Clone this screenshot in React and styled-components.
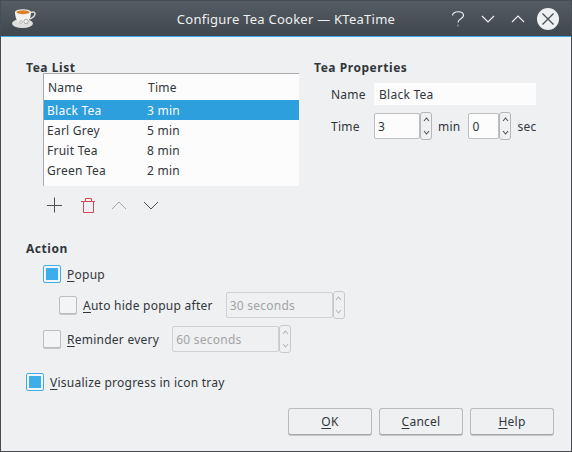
import React from 'react'
import styled, { createGlobalStyle } from 'styled-components'

const Global = createGlobalStyle`
  html, body { margin: 0; padding: 0; background: #eff0f1; }
  * { box-sizing: border-box; }
`

const Window = styled.div`
  width: 572px;
  height: 452px;
  display: flex;
  flex-direction: column;
  overflow: hidden;
  background: #eff0f1;
  color: #31363b;
  font-family: "Noto Sans", sans-serif;
  font-size: 12px;
  letter-spacing: 0.25px;
  border: 1px solid #474d53;
  border-top: 0;
`

const TitleBar = styled.div`
  height: 37px;
  flex: none;
  margin: 0 -1px;
  display: flex;
  align-items: center;
  background: linear-gradient(#555c64, #3f464c);
  border-bottom: 1px solid #3daee9;
  border-top: 1px solid #474d53;
  color: #eff0f1;
  padding: 0 13px 0 12px;
`

const Title = styled.div`
  flex: 1;
  text-align: center;
  font-size: 13px;
  padding-left: 85px;
`

const WinButtons = styled.div`
  display: flex;
  align-items: center;
  gap: 16px;
`

const CloseIcon = styled.svg`
  margin-left: -4px;
`

const Body = styled.div`
  flex: 1;
  display: flex;
  flex-direction: column;
  padding: 23px 17px 16px 25px;
`

const TopRow = styled.div`
  display: flex;
  height: 181px;
`

const LeftCol = styled.div`
  width: 288px;
  flex: none;
`

const Heading = styled.div`
  font-weight: 700;
  letter-spacing: 0.55px;
  line-height: 14px;
  height: 14px;
  margin-top: 1px;
`

const Table = styled.div`
  width: 256px;
  height: 113px;
  margin-left: 17px;
  margin-top: -2px;
  background: #fcfcfc;
  border-top: 1px solid #a9abad;
  border-left: 1px solid #a9abad;
`

const TableRow = styled.div`
  display: flex;
  height: 20px;
  line-height: 21px;
  padding-left: 3px;
  background: ${p => (p.$selected ? '#2d9fdd' : 'transparent')};
  color: ${p => (p.$selected ? '#fcfcfc' : '#31363b')};
`

const HeaderRow = styled(TableRow)`
  height: 26px;
  line-height: 27px;
  padding-left: 4px;
`

const NameCell = styled.div`
  width: 100px;
`

const IconBar = styled.div`
  display: flex;
  margin-left: 13px;
  margin-top: 8px;
`

const IconButton = styled.div`
  width: 32px;
  height: 22px;
  display: flex;
  align-items: center;
  justify-content: center;
`

const RightCol = styled.div`
  flex: 1;
`

const FormRow = styled.div`
  display: flex;
  align-items: center;
  margin-left: 17px;
`

const FormLabel = styled.div`
  width: 43px;
`

const NameField = styled.div`
  width: 162px;
  height: 22px;
  line-height: 23px;
  padding-left: 5px;
  background: #fcfcfc;
`

const TimeRow = styled(FormRow)`
  margin-top: 7px;
`

const SpinGroup = styled.div`
  display: flex;
  align-items: center;
  flex: none;
`

const SpinInput = styled.div`
  width: ${p => p.$w}px;
  height: 26px;
  line-height: 25px;
  margin-left: ${p => (p.$disabled ? '1px' : '0')};
  padding-left: 3px;
  background: ${p => (p.$disabled ? '#eff0f1' : '#fcfcfc')};
  color: ${p => (p.$disabled ? '#a2a4a6' : '#31363b')};
  border: 1px solid ${p => (p.$disabled ? '#d0d1d3' : '#bcbebf')};
  border-radius: 2px;
`

const SpinButtons = styled.div`
  width: 12px;
  height: 28px;
  border: 1px solid ${p => (p.$disabled ? '#c8c9cb' : '#b4b6b8')};
  border-radius: 3px;
  display: flex;
  flex-direction: column;
  align-items: center;
  justify-content: space-between;
  padding: 4px 0 4px;
  background: #eff0f1;
`

const Unit = styled.div`
  margin: 0 8px 0 6px;
`

const CheckRow = styled.div`
  display: flex;
  align-items: center;
  gap: 6px;
  height: ${p => p.$h}px;
  margin-top: ${p => p.$top || 0}px;
  margin-left: ${p => p.$indent || 0}px;
`

const Box = styled.div`
  width: 18px;
  height: 18px;
  flex: none;
  border-radius: 2px;
  border: 1px solid ${p => (p.$checked ? '#3daee9' : '#bcbebf')};
  background: #f3f4f5;
  box-shadow: ${p => (p.$checked ? 'none' : '0 1px 0 #c4c5c7')};
  padding: 2px;
`

const BoxFill = styled.div`
  width: 100%;
  height: 100%;
  background: #3daee9;
`

const Key = styled.span`
  text-decoration: underline;
  text-underline-offset: 2px;
`

const Footer = styled.div`
  display: flex;
  justify-content: flex-end;
  gap: 7px;
  margin-top: auto;
`

const PushButton = styled.div`
  width: 84px;
  height: 27px;
  line-height: 26px;
  text-align: center;
  border: 1px solid #b9bbbd;
  border-bottom-color: #a6a8aa;
  border-radius: 3px;
  background: #eff0f1;
  box-shadow: 0 1px 0 #c4c5c7;
`

const Spacer = styled.div`
  height: ${p => p.$h}px;
`

function Chevron ({ up, color = '#eff0f1', w = 14, h = 8, stroke = 1.2 }) {
  const points = up ? `1,${h - 1} ${w / 2},1 ${w - 1},${h - 1}` : `1,1 ${w / 2},${h - 1} ${w - 1},1`
  return (
    <svg width={w} height={h} viewBox={`0 0 ${w} ${h}`}>
      <polyline points={points} fill='none' stroke={color} strokeWidth={stroke} />
    </svg>
  )
}

function TeaCup () {
  return (
    <svg width='24' height='20' viewBox='0 0 24 20'>
      <ellipse cx='10.5' cy='14.5' rx='10.5' ry='4.5' fill='#dfe0de' />
      <path d='M3 3 C3 10 6 15 11 15 C16 15 19 10 19 3 Z' fill='#f2f2f0' />
      <ellipse cx='11' cy='3' rx='8' ry='2.8' fill='#f4f4f2' />
      <ellipse cx='11' cy='3.2' rx='6.6' ry='2' fill='#d9822b' />
      <path d='M19 3.5 C24 1.5 25 6.5 18 10' fill='none' stroke='#d8d8d6' strokeWidth='1.5' />
      <circle cx='14' cy='12.5' r='2.2' fill='none' stroke='#9a9a98' strokeWidth='0.8' />
      <circle cx='9' cy='13' r='1.5' fill='none' stroke='#b0b0ae' strokeWidth='0.8' />
    </svg>
  )
}

function Spin ({ disabled, w, value }) {
  const color = disabled ? '#b4b6b8' : '#4d5257'
  return (
    <SpinGroup>
      <SpinInput $w={w} $disabled={disabled}>{value}</SpinInput>
      <SpinButtons $disabled={disabled}>
        <Chevron up color={color} w={7} h={5} stroke={1.1} />
        <Chevron color={color} w={7} h={5} stroke={1.1} />
      </SpinButtons>
    </SpinGroup>
  )
}

const teas = [
  ['Black Tea', '3 min'],
  ['Earl Grey', '5 min'],
  ['Fruit Tea', '8 min'],
  ['Green Tea', '2 min']
]

export default function App () {
  return (
    <Window>
      <Global />
      <TitleBar>
        <TeaCup />
        <Title>Configure Tea Cooker — KTeaTime</Title>
        <WinButtons>
          <svg width='14' height='16' viewBox='0 0 14 16'>
            <path d='M1.5 4.5 C1.5 -0.5 12.5 -0.5 12.5 4.5 C12.5 8 7 7.5 7 11.5' fill='none' stroke='#eff0f1' strokeWidth='1.2' />
            <path d='M7 13.5 V15.5' stroke='#9a9fa3' strokeWidth='1.2' />
          </svg>
          <Chevron />
          <Chevron up />
          <CloseIcon width='22' height='22' viewBox='0 0 22 22'>
            <circle cx='11' cy='11' r='11' fill='#eff0f1' />
            <path d='M5.5 5.5 L16.5 16.5 M16.5 5.5 L5.5 16.5' stroke='#4a5157' strokeWidth='1.4' />
          </CloseIcon>
        </WinButtons>
      </TitleBar>
      <Body>
        <TopRow>
          <LeftCol>
            <Heading>Tea List</Heading>
            <Table>
              <HeaderRow>
                <NameCell>Name</NameCell>
                <div>Time</div>
              </HeaderRow>
              {teas.map(([name, time], i) => (
                <TableRow key={name} $selected={i === 0}>
                  <NameCell>{name}</NameCell>
                  <div>{time}</div>
                </TableRow>
              ))}
            </Table>
            <IconBar>
              <IconButton>
                <svg width='16' height='16' viewBox='0 0 16 16'>
                  <path d='M7.5 0.5 V15.5 M0 8.5 H15' stroke='#4d5257' strokeWidth='1' />
                </svg>
              </IconButton>
              <IconButton>
                <svg width='16' height='16' viewBox='0 0 16 16'>
                  <path d='M2 4.5 H16 M6.5 4.5 V1.5 H12.5 V4.5 M4.5 4.5 V15.5 H14.5 V4.5' fill='none' stroke='#da4453' strokeWidth='1' />
                </svg>
              </IconButton>
              <IconButton>
                <Chevron up color='#a4a6a8' w={16} h={9} stroke={1} />
              </IconButton>
              <IconButton>
                <Chevron color='#4d5257' w={16} h={9} stroke={1} />
              </IconButton>
            </IconBar>
          </LeftCol>
          <RightCol>
            <Heading>Tea Properties</Heading>
            <Spacer $h={8} />
            <FormRow>
              <FormLabel>Name</FormLabel>
              <NameField>Black Tea</NameField>
            </FormRow>
            <TimeRow>
              <FormLabel>Time</FormLabel>
              <Spin w={46} value='3' />
              <Unit>min</Unit>
              <Spin w={31} value='0' />
              <Unit>sec</Unit>
            </TimeRow>
          </RightCol>
        </TopRow>
        <Heading>Action</Heading>
        <Spacer $h={5} />
        <CheckRow $indent={17} $h={26}>
          <Box $checked><BoxFill /></Box>
          <span><Key>P</Key>opup</span>
        </CheckRow>
        <Spacer $h={3} />
        <CheckRow $indent={33} $h={30}>
          <Box />
          <span><Key>A</Key>uto hide popup after</span>
          <Spacer $h={0} />
          <Spin disabled w={107} value='30 seconds' />
        </CheckRow>
        <Spacer $h={4} />
        <CheckRow $indent={17} $h={30}>
          <Box />
          <span><Key>R</Key>eminder every</span>
          <Spacer $h={0} />
          <Spin disabled w={107} value='60 seconds' />
        </CheckRow>
        <CheckRow $top={16} $h={24}>
          <Box $checked><BoxFill /></Box>
          <span><Key>V</Key>isualize progress in icon tray</span>
        </CheckRow>
        <Footer>
          <PushButton><Key>O</Key>K</PushButton>
          <PushButton><Key>C</Key>ancel</PushButton>
          <PushButton><Key>H</Key>elp</PushButton>
        </Footer>
      </Body>
    </Window>
  )
}
